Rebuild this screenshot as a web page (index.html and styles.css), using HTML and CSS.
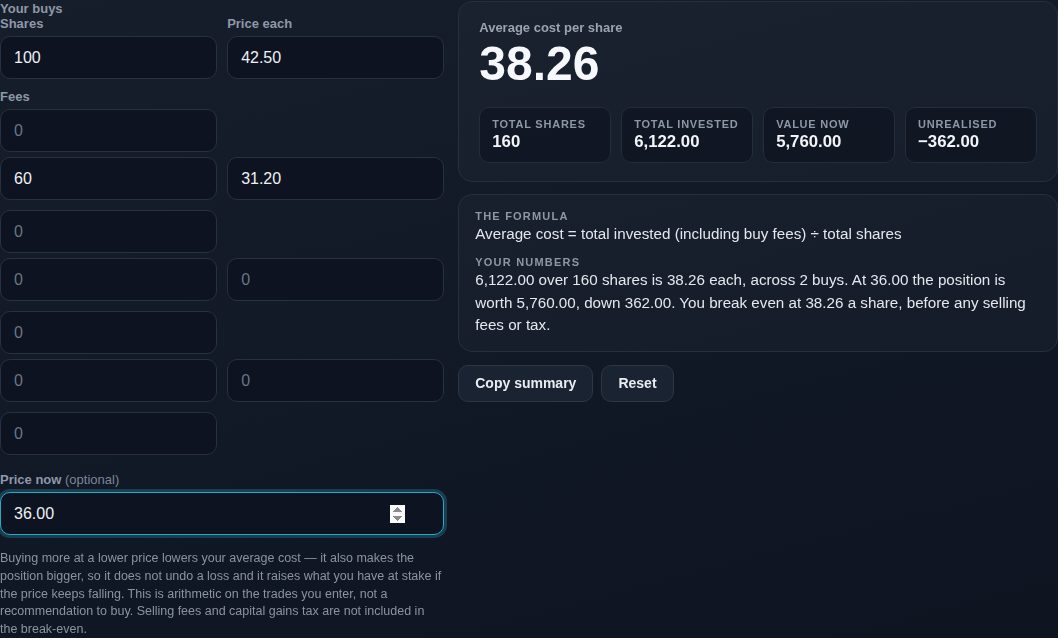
FILE: index.html
```html
<!DOCTYPE html>
<html lang="en">
<head>
    <meta charset="UTF-8">
    <meta name="viewport" content="width=device-width, initial-scale=1.0">
    <title>Average Cost Calculator</title>
    <link rel="stylesheet" href="styles.css">
</head>
<body>
    <main class="calc">
        <section class="inputs">
            <div class="section-title">Your buys</div>
            <div class="buys" id="buys">
                <div class="buy">
                    <label class="field">
                        <span class="field-label">Shares</span>
                        <input type="number" class="shares" value="100" placeholder="0" min="0" step="any">
                    </label>
                    <label class="field">
                        <span class="field-label">Price each</span>
                        <input type="number" class="price" value="42.50" placeholder="0" min="0" step="any">
                    </label>
                    <label class="field">
                        <span class="field-label">Fees</span>
                        <input type="number" class="fees" placeholder="0" min="0" step="any">
                    </label>
                </div>
                <div class="buy">
                    <input type="number" class="shares" value="60" placeholder="0" aria-label="Shares">
                    <input type="number" class="price" value="31.20" placeholder="0" aria-label="Price each">
                    <input type="number" class="fees" placeholder="0" aria-label="Fees">
                </div>
                <div class="buy">
                    <input type="number" class="shares" placeholder="0" aria-label="Shares">
                    <input type="number" class="price" placeholder="0" aria-label="Price each">
                    <input type="number" class="fees" placeholder="0" aria-label="Fees">
                </div>
                <div class="buy">
                    <input type="number" class="shares" placeholder="0" aria-label="Shares">
                    <input type="number" class="price" placeholder="0" aria-label="Price each">
                    <input type="number" class="fees" placeholder="0" aria-label="Fees">
                </div>
            </div>

            <label class="field price-now">
                <span class="field-label">Price now <span class="optional">(optional)</span></span>
                <input type="number" id="priceNow" value="36.00" min="0" step="any" autofocus>
            </label>

            <p class="note">Buying more at a lower price lowers your average cost — it also makes the position bigger, so it does not undo a loss and it raises what you have at stake if the price keeps falling. This is arithmetic on the trades you enter, not a recommendation to buy. Selling fees and capital gains tax are not included in the break-even.</p>
        </section>

        <section class="results">
            <div class="card summary">
                <div class="summary-label">Average cost per share</div>
                <div class="summary-value" id="avg">38.26</div>
                <div class="stats">
                    <div class="stat">
                        <div class="stat-label">Total shares</div>
                        <div class="stat-value" id="totalShares">160</div>
                    </div>
                    <div class="stat">
                        <div class="stat-label">Total invested</div>
                        <div class="stat-value" id="totalInvested">6,122.00</div>
                    </div>
                    <div class="stat">
                        <div class="stat-label">Value now</div>
                        <div class="stat-value" id="valueNow">5,760.00</div>
                    </div>
                    <div class="stat">
                        <div class="stat-label">Unrealised</div>
                        <div class="stat-value" id="unrealised">−362.00</div>
                    </div>
                </div>
            </div>

            <div class="card explain">
                <div class="explain-label">The formula</div>
                <div class="explain-text">Average cost = total invested (including buy fees) ÷ total shares</div>
                <div class="explain-label spaced">Your numbers</div>
                <p class="explain-text" id="summary">6,122.00 over 160 shares is 38.26 each, across 2 buys. At 36.00 the position is worth 5,760.00, down 362.00. You break even at 38.26 a share, before any selling fees or tax.</p>
            </div>

            <div class="actions">
                <button type="button" id="copyBtn">Copy summary</button>
                <button type="button" id="resetBtn">Reset</button>
            </div>
        </section>
    </main>
    <script>
        const fmt = n => n.toLocaleString('en-US', { minimumFractionDigits: 2, maximumFractionDigits: 2 });

        function num(el) {
            const v = parseFloat(el.value);
            return isNaN(v) ? 0 : v;
        }

        function update() {
            let shares = 0, invested = 0, count = 0;
            document.querySelectorAll('.buy').forEach(row => {
                const s = num(row.querySelector('.shares'));
                const p = num(row.querySelector('.price'));
                const f = num(row.querySelector('.fees'));
                if (s > 0) {
                    shares += s;
                    invested += s * p + f;
                    count++;
                }
            });

            const avg = shares ? invested / shares : 0;
            const now = num(document.getElementById('priceNow'));
            const value = shares * now;
            const diff = value - invested;

            document.getElementById('avg').textContent = fmt(avg);
            document.getElementById('totalShares').textContent = shares.toLocaleString('en-US');
            document.getElementById('totalInvested').textContent = fmt(invested);
            document.getElementById('valueNow').textContent = fmt(value);
            document.getElementById('unrealised').textContent = (diff < 0 ? '\u2212' : '') + fmt(Math.abs(diff));

            document.getElementById('summary').textContent =
                `${fmt(invested)} over ${shares.toLocaleString('en-US')} shares is ${fmt(avg)} each, across ${count} buys. ` +
                `At ${fmt(now)} the position is worth ${fmt(value)}, ${diff < 0 ? 'down' : 'up'} ${fmt(Math.abs(diff))}. ` +
                `You break even at ${fmt(avg)} a share, before any selling fees or tax.`;
        }

        document.querySelectorAll('input').forEach(el => el.addEventListener('input', update));

        document.getElementById('resetBtn').addEventListener('click', () => {
            document.querySelectorAll('input').forEach(el => el.value = '');
            update();
        });

        document.getElementById('copyBtn').addEventListener('click', () => {
            navigator.clipboard && navigator.clipboard.writeText(document.getElementById('summary').textContent);
        });
    </script>
</body>
</html>
```

FILE: styles.css
```css
* {
    box-sizing: border-box;
}
body {
    margin: 0;
    min-height: 100vh;
    background: linear-gradient(165deg, #161e2c 0%, #111826 55%, #0e1420 100%);
    color: #e6eaf0;
    font-family: 'Liberation Sans', Arial, sans-serif;
}
.calc {
    display: grid;
    grid-template-columns: minmax(0, 1fr) minmax(0, 1.35fr);
    column-gap: 14px;
    align-items: start;
    padding-top: 1px;
}

/* left column */
.section-title {
    font-size: 13px;
    font-weight: bold;
    line-height: 15px;
    color: #8e98a7;
}
.buys {
    display: flex;
    flex-direction: column;
    gap: 5px;
}
.buy {
    display: grid;
    grid-template-columns: 1fr 1fr;
    gap: 10px;
}
.field {
    display: block;
}
.field-label {
    display: block;
    font-size: 13px;
    font-weight: bold;
    line-height: 16px;
    color: #8e98a7;
    margin-bottom: 4px;
}
.optional {
    font-weight: normal;
    color: #7c8695;
}
input {
    display: block;
    width: 100%;
    height: 43px;
    padding: 0 13px;
    background: #0d1320;
    border: 1px solid #273142;
    border-radius: 10px;
    color: #eef1f5;
    font-family: inherit;
    font-size: 16px;
    outline: none;
}
input::placeholder {
    color: #6b7584;
}
input:focus {
    border-color: #27a9c4;
    box-shadow: 0 0 0 3px rgba(39, 169, 196, 0.28);
}
.price-now {
    margin-top: 17px;
}
.price-now input {
    padding-right: 38px;
}
.note {
    margin: 15px 0 0;
    font-size: 12.5px;
    line-height: 1.42;
    color: #8a93a1;
}

/* right column */
.results {
    display: flex;
    flex-direction: column;
    align-items: flex-start;
    gap: 12px;
}
.card {
    width: 100%;
    background: rgba(255, 255, 255, 0.025);
    border: 1px solid #243041;
    border-radius: 14px;
}
.summary {
    padding: 18px 20px;
}
.summary-label {
    font-size: 13px;
    font-weight: bold;
    line-height: 16px;
    color: #9aa3b1;
}
.summary-value {
    margin-top: 4px;
    font-size: 48px;
    font-weight: bold;
    line-height: 48px;
    color: #f6f8fb;
}
.stats {
    margin-top: 19px;
    display: grid;
    grid-template-columns: repeat(4, 1fr);
    gap: 10px;
}
.stat {
    padding: 10px 12px;
    background: rgba(6, 10, 20, 0.35);
    border: 1px solid #232d3d;
    border-radius: 10px;
}
.stat-label {
    font-size: 11px;
    font-weight: bold;
    line-height: 13px;
    letter-spacing: 0.07em;
    text-transform: uppercase;
    color: #8d97a6;
}
.stat-value {
    font-size: 16.8px;
    font-weight: bold;
    line-height: 21px;
    color: #f3f5f8;
}
.explain {
    padding: 15px 16px 14px;
}
.explain-label {
    font-size: 11px;
    font-weight: bold;
    line-height: 13px;
    letter-spacing: 0.11em;
    text-transform: uppercase;
    color: #8d97a6;
}
.explain-label.spaced {
    margin-top: 10px;
}
.explain-text {
    margin: 0;
    font-size: 15.2px;
    line-height: 1.5;
    color: #e4e8ee;
}
.actions {
    display: flex;
    gap: 8px;
    margin-top: 1px;
}
button {
    padding: 9px 16px;
    background: #1a2332;
    border: 1px solid #2c3646;
    border-radius: 10px;
    color: #e9edf2;
    font-family: inherit;
    font-size: 14px;
    font-weight: bold;
    line-height: 17px;
    cursor: pointer;
}
button:hover {
    background: #222c3d;
}
```
